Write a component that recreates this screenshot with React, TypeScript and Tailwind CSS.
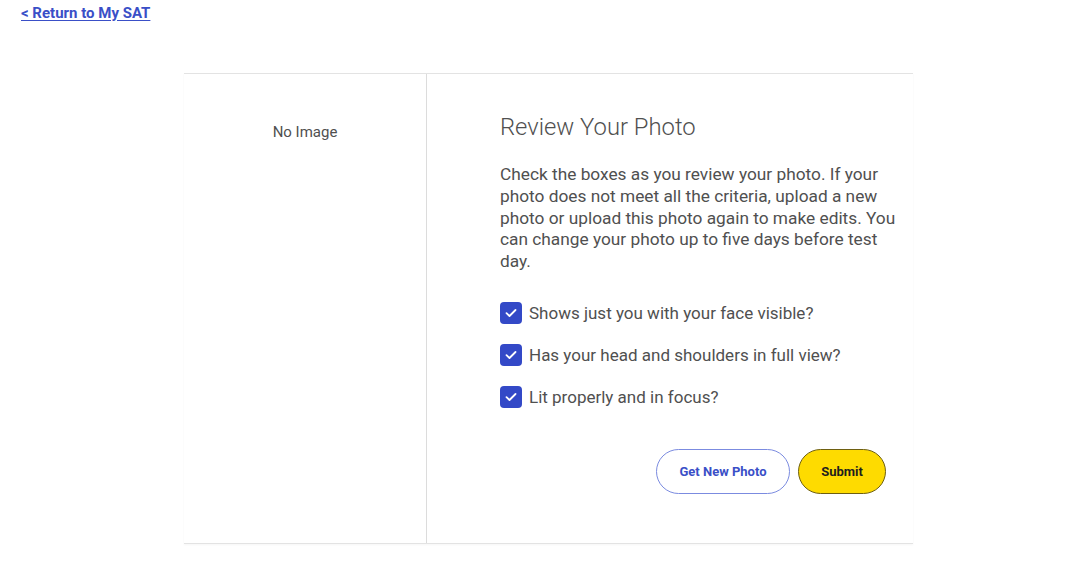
import React from "react";

const Check = () => (
  <span className="flex h-[22px] w-[22px] shrink-0 items-center justify-center rounded-[4px] bg-[#3349c7]">
    <svg width="12" height="10" viewBox="0 0 12 10" fill="none">
      <path d="M1.5 5.2 L4.5 8 L10.5 2" stroke="white" strokeWidth="1.8" strokeLinecap="round" strokeLinejoin="round" />
    </svg>
  </span>
);

export default function App() {
  const items = [
    "Shows just you with your face visible?",
    "Has your head and shoulders in full view?",
    "Lit properly and in focus?",
  ];
  return (
    <div className="min-h-[563px] bg-white" style={{ fontFamily: "Roboto, 'Liberation Sans', sans-serif" }}>
      <div className="pl-[21px] pt-[3px] leading-[20px]">
        <a href="#" className="text-[15px] font-bold leading-[20px] text-[#3a4fc7] underline underline-offset-2">
          &lt; Return to My SAT
        </a>
      </div>
      <div className="ml-[184px] mt-[50px] flex w-[729px] border-y border-[#e3e3e3] shadow-[0_1px_2px_rgba(0,0,0,0.04)]">
        <div className="w-[243px] shrink-0 border-r border-[#dcdcdc] pt-[46px] text-center">
          <span className="text-[15px] leading-[20px] text-[#505050]">No Image</span>
        </div>
        <div className="flex-1 pl-[73px] pr-[12px] pt-[37px] pb-[49px]">
          <h1 className="text-[23.8px] font-light leading-[32px] text-[#505050]">Review Your Photo</h1>
          <p className="mt-[21px] text-[17.3px] leading-[21.75px] text-[#505050]">
            Check the boxes as you review your photo. If your photo does not meet all the criteria, upload a new photo or upload this photo again to make edits. You can change your photo up to five days before test day.
          </p>
          <div className="mt-[29px] flex flex-col gap-[20px]">
            {items.map((t) => (
              <label key={t} className="flex items-center gap-[7px]">
                <Check />
                <span className="text-[17px] leading-[22px] text-[#505050]">{t}</span>
              </label>
            ))}
          </div>
          <div className="mt-[41px] flex justify-end gap-[8px] pr-[15px]">
            <button className="h-[45px] w-[134px] rounded-full border border-[#7b8be0] bg-white text-[13px] font-bold text-[#3a4fc7]">
              Get New Photo
            </button>
            <button className="h-[45px] w-[88px] rounded-full border border-[#6e5f10] bg-[#fedb00] text-[13px] font-bold text-[#1e1e1e]">
              Submit
            </button>
          </div>
        </div>
      </div>
    </div>
  );
}
